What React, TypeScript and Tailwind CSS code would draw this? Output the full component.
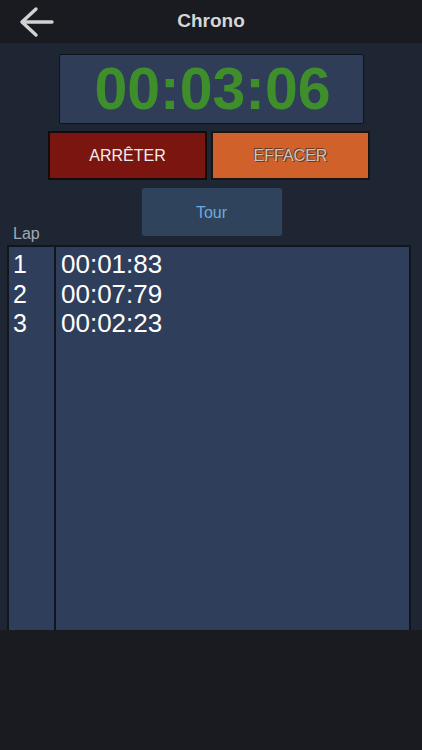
import React from "react"

const laps = [
    { n: 1, time: "00:01:83" },
    { n: 2, time: "00:07:79" },
    { n: 3, time: "00:02:23" },
]

export default function App() {
    return (
        <div
            className="flex h-[750px] w-[422px] flex-col overflow-hidden bg-[#191b21]"
            style={{ fontFamily: '"Liberation Sans", Arial, sans-serif' }}
        >
            {/* header */}
            <div className="relative flex h-[43px] shrink-0 items-center justify-center bg-[#191b21]">
                <button className="absolute left-[19px] top-[6px] h-[32px] w-[35px]">
                    <svg viewBox="0 0 35 32" className="h-[32px] w-[35px]" fill="none" stroke="#d2d2d2" strokeWidth="3.4" strokeLinecap="round" strokeLinejoin="round">
                        <path d="M17 3 L3 16 L17 29" />
                        <path d="M3.5 16 H33" />
                    </svg>
                </button>
                <span className="text-[19px] font-bold text-[#d6d6d6]">Chrono</span>
            </div>

            {/* body */}
            <div className="flex h-[587px] shrink-0 flex-col bg-[#1f2633]">
                <div className="mt-[11px] flex justify-center">
                    <div className="flex h-[70px] w-[305px] items-center justify-center rounded-[2px] border border-[#0f131b] bg-[#2f3d58] pt-[1px] pl-[3px]">
                        <span className="text-[59px] font-bold leading-none text-[#3e8e2c]">00:03:06</span>
                    </div>
                </div>

                <div className="mt-[7px] flex justify-center gap-[4px] pr-[4px]">
                    <button className="flex h-[49px] w-[159px] items-center justify-center border-2 border-[#140c0c] bg-[#7a160f] text-[16px] text-[#f2ecea]">
                        ARRÊTER
                    </button>
                    <button
                        className="flex h-[49px] w-[159px] items-center justify-center border-2 border-[#1a1410] bg-[#d0612a] pt-[1px] text-[16px] text-[#c9c4c0]"
                        style={{ textShadow: "-1px -1px 0 #6b3a22, 1px 1px 0 #6b3a22" }}
                    >
                        EFFACER
                    </button>
                </div>

                <div className="mt-[8px] flex justify-center pl-[1px]">
                    <button className="flex h-[48px] w-[140px] items-center justify-center rounded-[3px] bg-[#2f445c] pt-[1px] text-[16px] text-[#6fa9dc]">
                        Tour
                    </button>
                </div>

                <div className="relative flex min-h-0 flex-1 flex-col">
                    <span className="absolute left-[13px] top-[-10px] text-[16px] leading-none text-[#a3a8b0]">Lap</span>
                    <div className="ml-[7px] mr-[11px] mt-[9px] flex flex-1 border-[2px] border-b-0 border-[#11151c] bg-[#2f3e5a]">
                        <div className="w-[47px] shrink-0 border-r-2 border-[#11151c] pl-[4px] pt-[3px]">
                            {laps.map((l) => (
                                <div key={l.n} className="h-[29.5px] text-[25px] leading-[29.5px] text-white">
                                    {l.n}
                                </div>
                            ))}
                        </div>
                        <div className="flex-1 pl-[5px] pt-[3px]">
                            {laps.map((l) => (
                                <div key={l.n} className="h-[29.5px] text-[26px] leading-[29.5px] text-white">
                                    {l.time}
                                </div>
                            ))}
                        </div>
                    </div>
                </div>
            </div>

            <div className="flex-1 bg-[#191b21]" />
        </div>
    )
}
